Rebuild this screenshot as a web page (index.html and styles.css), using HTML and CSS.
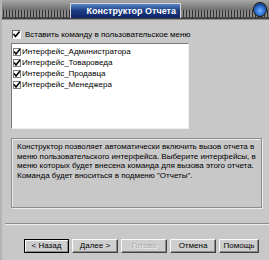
FILE: index.html
```html
<!DOCTYPE html>
<html lang="ru">
<head>
  <meta charset="UTF-8" />
  <title>Конструктор Отчета</title>
  <link rel="stylesheet" href="styles.css">
</head>
<body>
  <div class="window">
    <div class="titlebar">
      <div class="tab">Конструктор Отчета</div>
      <span class="close"></span>
    </div>

    <div class="content">
      <div class="check-row">
        <span class="box">
          <svg width="9" height="9" viewBox="0 0 9 9"><polyline points="1.5,4 3.5,6.5 7.5,1.5" fill="none" stroke="#000" stroke-width="1.6"/></svg>
        </span>
        <span>Вставить команду в пользовательское меню</span>
      </div>

      <div class="listbox">
        <div class="item">
          <span class="mini"><svg width="8" height="8" viewBox="0 0 8 8"><polyline points="1,3.5 3,6 7,1" fill="none" stroke="#000" stroke-width="1.5"/></svg></span>
          Интерфейс_Администратора
        </div>
        <div class="item">
          <span class="mini"><svg width="8" height="8" viewBox="0 0 8 8"><polyline points="1,3.5 3,6 7,1" fill="none" stroke="#000" stroke-width="1.5"/></svg></span>
          Интерфейс_Товароведа
        </div>
        <div class="item">
          <span class="mini"><svg width="8" height="8" viewBox="0 0 8 8"><polyline points="1,3.5 3,6 7,1" fill="none" stroke="#000" stroke-width="1.5"/></svg></span>
          Интерфейс_Продавца
        </div>
        <div class="item">
          <span class="mini"><svg width="8" height="8" viewBox="0 0 8 8"><polyline points="1,3.5 3,6 7,1" fill="none" stroke="#000" stroke-width="1.5"/></svg></span>
          Интерфейс_Менеджера
        </div>
      </div>

      <div class="info">
        Конструктор позволяет автоматически включить вызов отчета в
        меню пользовательского интерфейса. Выберите интерфейсы, в
        меню которых будет внесена команда для вызова этого отчета.
        Команда будет вноситься в подменю "Отчеты".
      </div>
    </div>

    <div class="sep"></div>

    <div class="buttons">
      <button class="btn default">&lt; Назад</button>
      <button class="btn">Далее &gt;</button>
      <button class="btn disabled">Готово</button>
      <button class="btn">Отмена</button>
      <button class="btn narrow">Помощь</button>
    </div>
  </div>
</body>
</html>
```

FILE: styles.css
```css
body {
  margin: 0;
  font-family: "Liberation Sans", Arial, sans-serif;
  font-size: 8px;
  color: #000;
  background-color: #c8c8c8;
}

.window {
  width: 269px;
  height: 260px;
  background-color: #c8c8c8;
  border-left: 2px solid #b4b4b4;
  box-sizing: border-box;
  overflow: hidden;
}

.titlebar {
  height: 19px;
  display: flex;
  align-items: flex-start;
  background:
    repeating-linear-gradient(90deg, #2e2e2e 0 1px, #8a8a8a 1px 3px) 0 10px / 100% 7px no-repeat,
    linear-gradient(180deg, #a8a8a8 0%, #6e6e6e 55%, #3c3c3c 100%);
  border-bottom: 1px solid #8c8c8c;
  margin-left: -2px;
}

.tab {
  margin-left: 70px;
  margin-top: 3px;
  width: 105px;
  height: 14px;
  border: 1px solid #d8d8d8;
  border-bottom: none;
  background: linear-gradient(180deg, #5a86c8 0%, #1d3f86 45%, #0f2466 100%);
  color: #fff;
  font-weight: bold;
  font-size: 9px;
  line-height: 15px;
  text-align: right;
  padding-right: 4px;
  box-sizing: content-box;
}

.close {
  margin-left: auto;
  margin-right: 3px;
  margin-top: 3px;
  width: 12px;
  height: 13px;
  border-radius: 50%;
  background: radial-gradient(circle at 50% 60%, #6fb4ff 0%, #2a6fd0 45%, #0c2e70 80%);
  box-shadow: 0 0 0 1px #1a1a1a;
}

.content {
  padding: 9px 0 0 9px;
}

.check-row {
  display: flex;
  align-items: center;
  gap: 4px;
  height: 10px;
  margin-left: 1px;
}

.box {
  width: 9px;
  height: 9px;
  background: #fff;
  border-top: 1px solid #6a6a6a;
  border-left: 1px solid #6a6a6a;
  border-right: 1px solid #fff;
  border-bottom: 1px solid #fff;
  box-sizing: border-box;
  display: flex;
}

.box svg {
  margin: -1px;
}

.listbox {
  margin-top: 4px;
  width: 178px;
  height: 86px;
  background: #fff;
  border-top: 1px solid #7a7a7a;
  border-left: 1px solid #7a7a7a;
  border-right: 1px solid #efefef;
  border-bottom: 1px solid #efefef;
  box-sizing: border-box;
  padding: 2px 0 0 1px;
}

.item {
  display: flex;
  align-items: center;
  gap: 1px;
  height: 11px;
}

.mini {
  width: 8px;
  height: 8px;
  border: 1px solid #808080;
  box-sizing: border-box;
  display: flex;
}

.mini svg {
  margin: -1px;
}

.info {
  margin-top: 9px;
  width: 251px;
  height: 70px;
  box-sizing: border-box;
  border: 1px solid #8c8c8c;
  box-shadow: inset 1px 1px 0 #ececec, 1px 1px 0 #ececec;
  padding: 3px 4px 0 5px;
  line-height: 9.5px;
}

.sep {
  margin-top: 15px;
  height: 0;
  border-top: 1px solid #8c8c8c;
  border-bottom: 1px solid #ececec;
  margin-left: 3px;
}

.buttons {
  display: flex;
  gap: 3px;
  margin-top: 14px;
  margin-left: 22px;
}

.btn {
  width: 46px;
  height: 14px;
  padding: 0;
  font-family: "Liberation Sans", Arial, sans-serif;
  font-size: 8px;
  line-height: 10px;
  color: #000;
  background: #cecece;
  border: 1px solid;
  border-color: #fafafa #404040 #404040 #fafafa;
  box-shadow: inset -1px -1px 0 #8a8a8a;
}

.btn.default {
  width: 45px;
  outline: 1px solid #000;
  outline-offset: -1px;
  border-color: #000;
  box-shadow: inset 1px 1px 0 #fafafa, inset -1px -1px 0 #8a8a8a;
}

.btn.disabled {
  color: #a8a8a8;
  text-shadow: 1px 1px 0 #f4f4f4;
}

.btn.narrow {
  width: 40px;
}
```
